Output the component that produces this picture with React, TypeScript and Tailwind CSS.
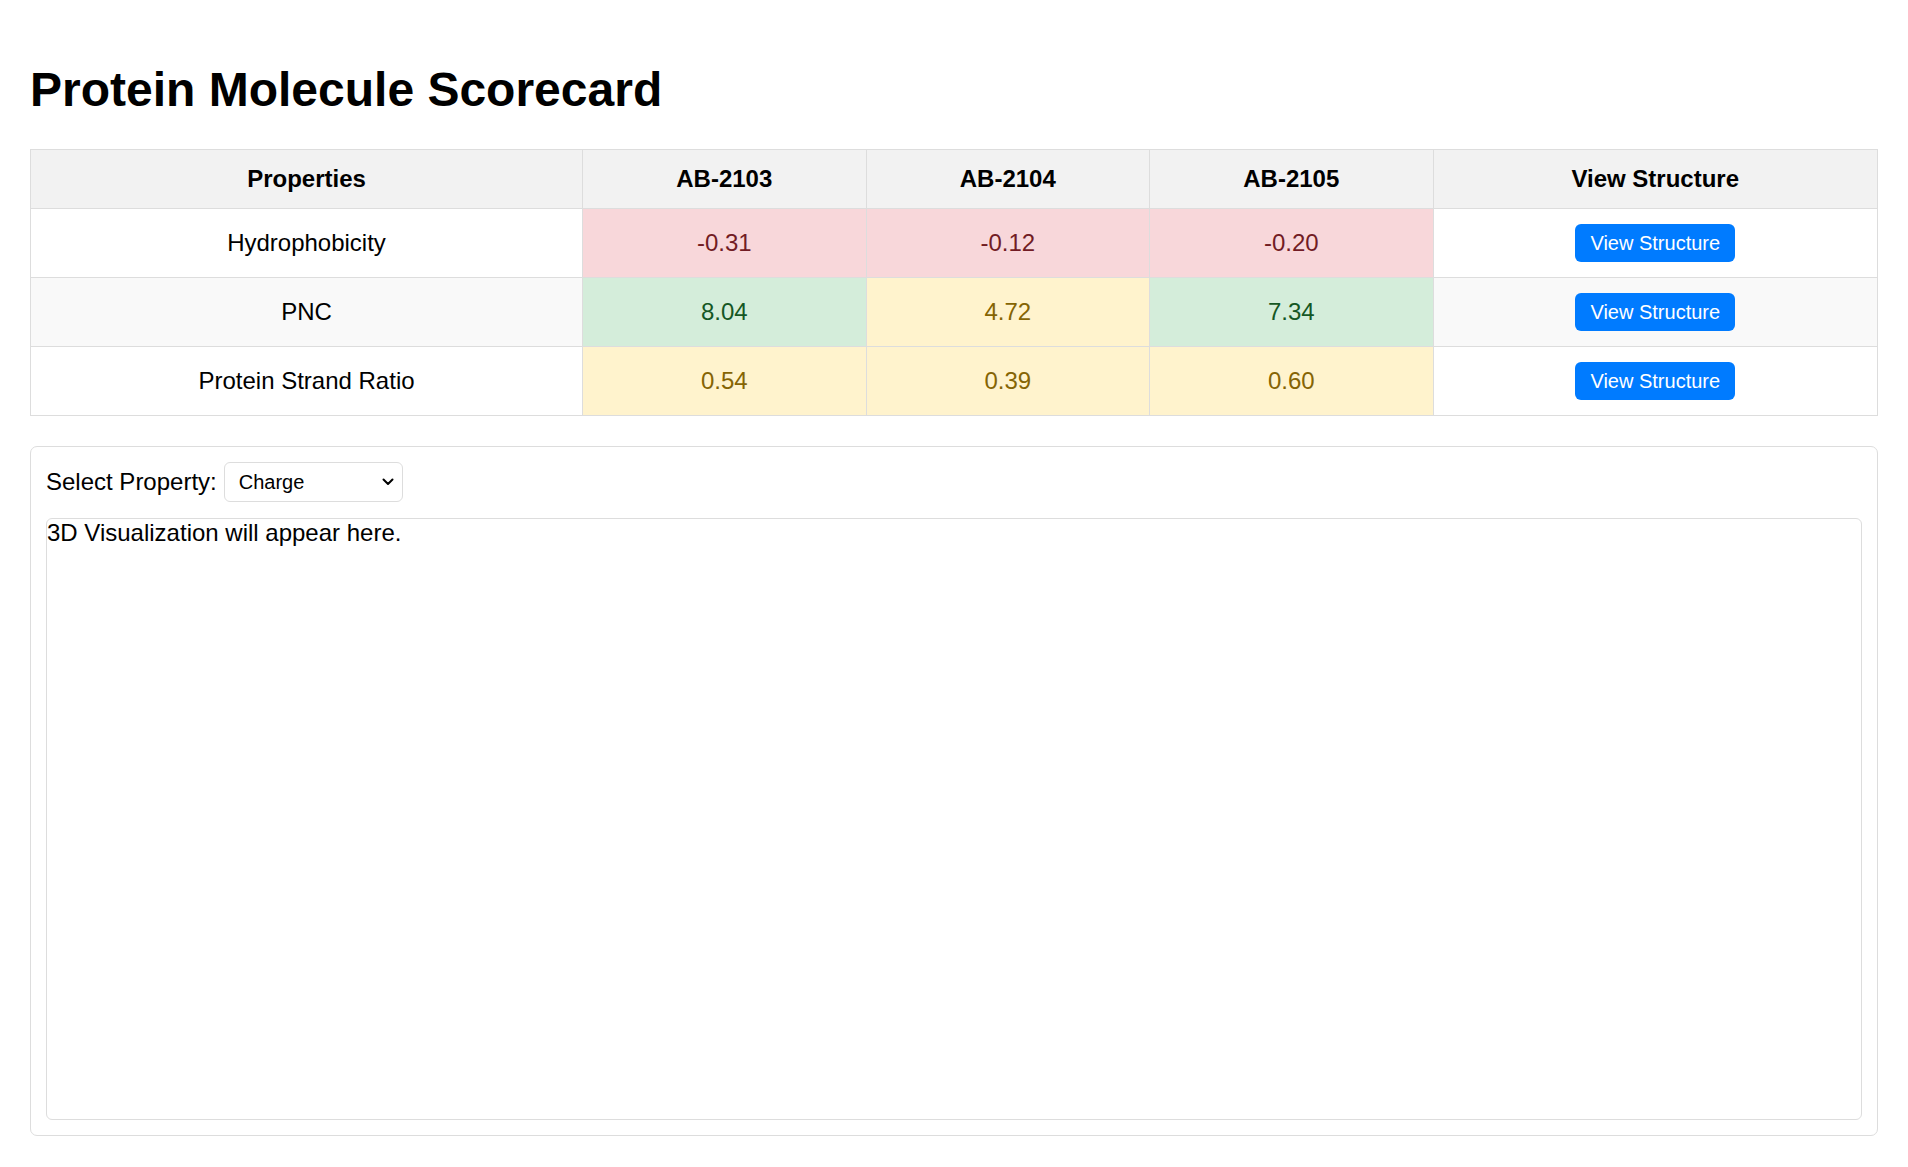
import { useState } from 'react'

type Tone = 'bad' | 'good' | 'mid'

const toneClass: Record<Tone, string> = {
  bad: 'bg-[#f8d7da] text-[#721c24]',
  good: 'bg-[#d4edda] text-[#155724]',
  mid: 'bg-[#fff3cd] text-[#856404]',
}

const molecules = ['AB-2103', 'AB-2104', 'AB-2105']

const rows: { name: string; values: [string, Tone][] }[] = [
  { name: 'Hydrophobicity', values: [['-0.31', 'bad'], ['-0.12', 'bad'], ['-0.20', 'bad']] },
  { name: 'PNC', values: [['8.04', 'good'], ['4.72', 'mid'], ['7.34', 'good']] },
  { name: 'Protein Strand Ratio', values: [['0.54', 'mid'], ['0.39', 'mid'], ['0.60', 'mid']] },
]

export default function App() {
  const [property, setProperty] = useState('Charge')

  return (
    <div className="min-h-screen bg-white px-[30px] pb-[30px] pt-[30px] font-['Liberation_Sans',Arial,sans-serif] leading-[normal] text-black">
      <h1 className="mb-[32px] mt-[32px] text-[48px] font-bold leading-[55px]">Protein Molecule Scorecard</h1>

      <table className="w-full table-fixed border-collapse text-[24px]">
        <colgroup>
          <col className="w-[552px]" />
          <col className="w-[283.5px]" />
          <col className="w-[283.5px]" />
          <col className="w-[283.5px]" />
          <col />
        </colgroup>
        <thead>
          <tr className="bg-[#f2f2f2]">
            <th className="border border-[#ddd] p-[15px] text-center font-bold">Properties</th>
            {molecules.map((m) => (
              <th key={m} className="border border-[#ddd] p-[15px] text-center font-bold">
                {m}
              </th>
            ))}
            <th className="border border-[#ddd] p-[15px] text-center font-bold">View Structure</th>
          </tr>
        </thead>
        <tbody>
          {rows.map((row, i) => (
            <tr key={row.name} className={i % 2 === 1 ? 'bg-[#f9f9f9]' : 'bg-white'}>
              <td className="border border-[#ddd] p-[15px] text-center">{row.name}</td>
              {row.values.map(([v, tone], j) => (
                <td key={j} className={`border border-[#ddd] p-[15px] text-center ${toneClass[tone]}`}>
                  {v}
                </td>
              ))}
              <td className="border border-[#ddd] p-[15px] text-center">
                <button className="rounded-[6px] bg-[#007bff] px-[15px] py-[7.5px] text-[20px] leading-[23px] text-white">
                  View Structure
                </button>
              </td>
            </tr>
          ))}
        </tbody>
      </table>

      <div className="mt-[30px] rounded-[7px] border border-[#ddd] p-[15px]">
        <div className="flex items-center">
          <label className="mr-[7px] text-[24px]">Select Property:</label>
          <div className="relative">
            <select
              value={property}
              onChange={(e) => setProperty(e.target.value)}
              className="h-[40px] w-[179px] appearance-none rounded-[6px] border border-[#ddd] bg-white pl-[14px] pr-[30px] text-[20px] text-black"
            >
              <option>Charge</option>
              <option>Hydrophobicity</option>
              <option>PNC</option>
            </select>
            <svg
              className="pointer-events-none absolute right-[9px] top-[16px]"
              width="12"
              height="8"
              viewBox="0 0 12 8"
              fill="none"
            >
              <path d="M1.5 1.5 6 6l4.5-4.5" stroke="#000" strokeWidth="2" strokeLinecap="round" strokeLinejoin="round" />
            </svg>
          </div>
        </div>
        <div className="mt-[16px] h-[602px] rounded-[6px] border border-[#ddd] text-[24px]">
          3D Visualization will appear here.
        </div>
      </div>
    </div>
  )
}
